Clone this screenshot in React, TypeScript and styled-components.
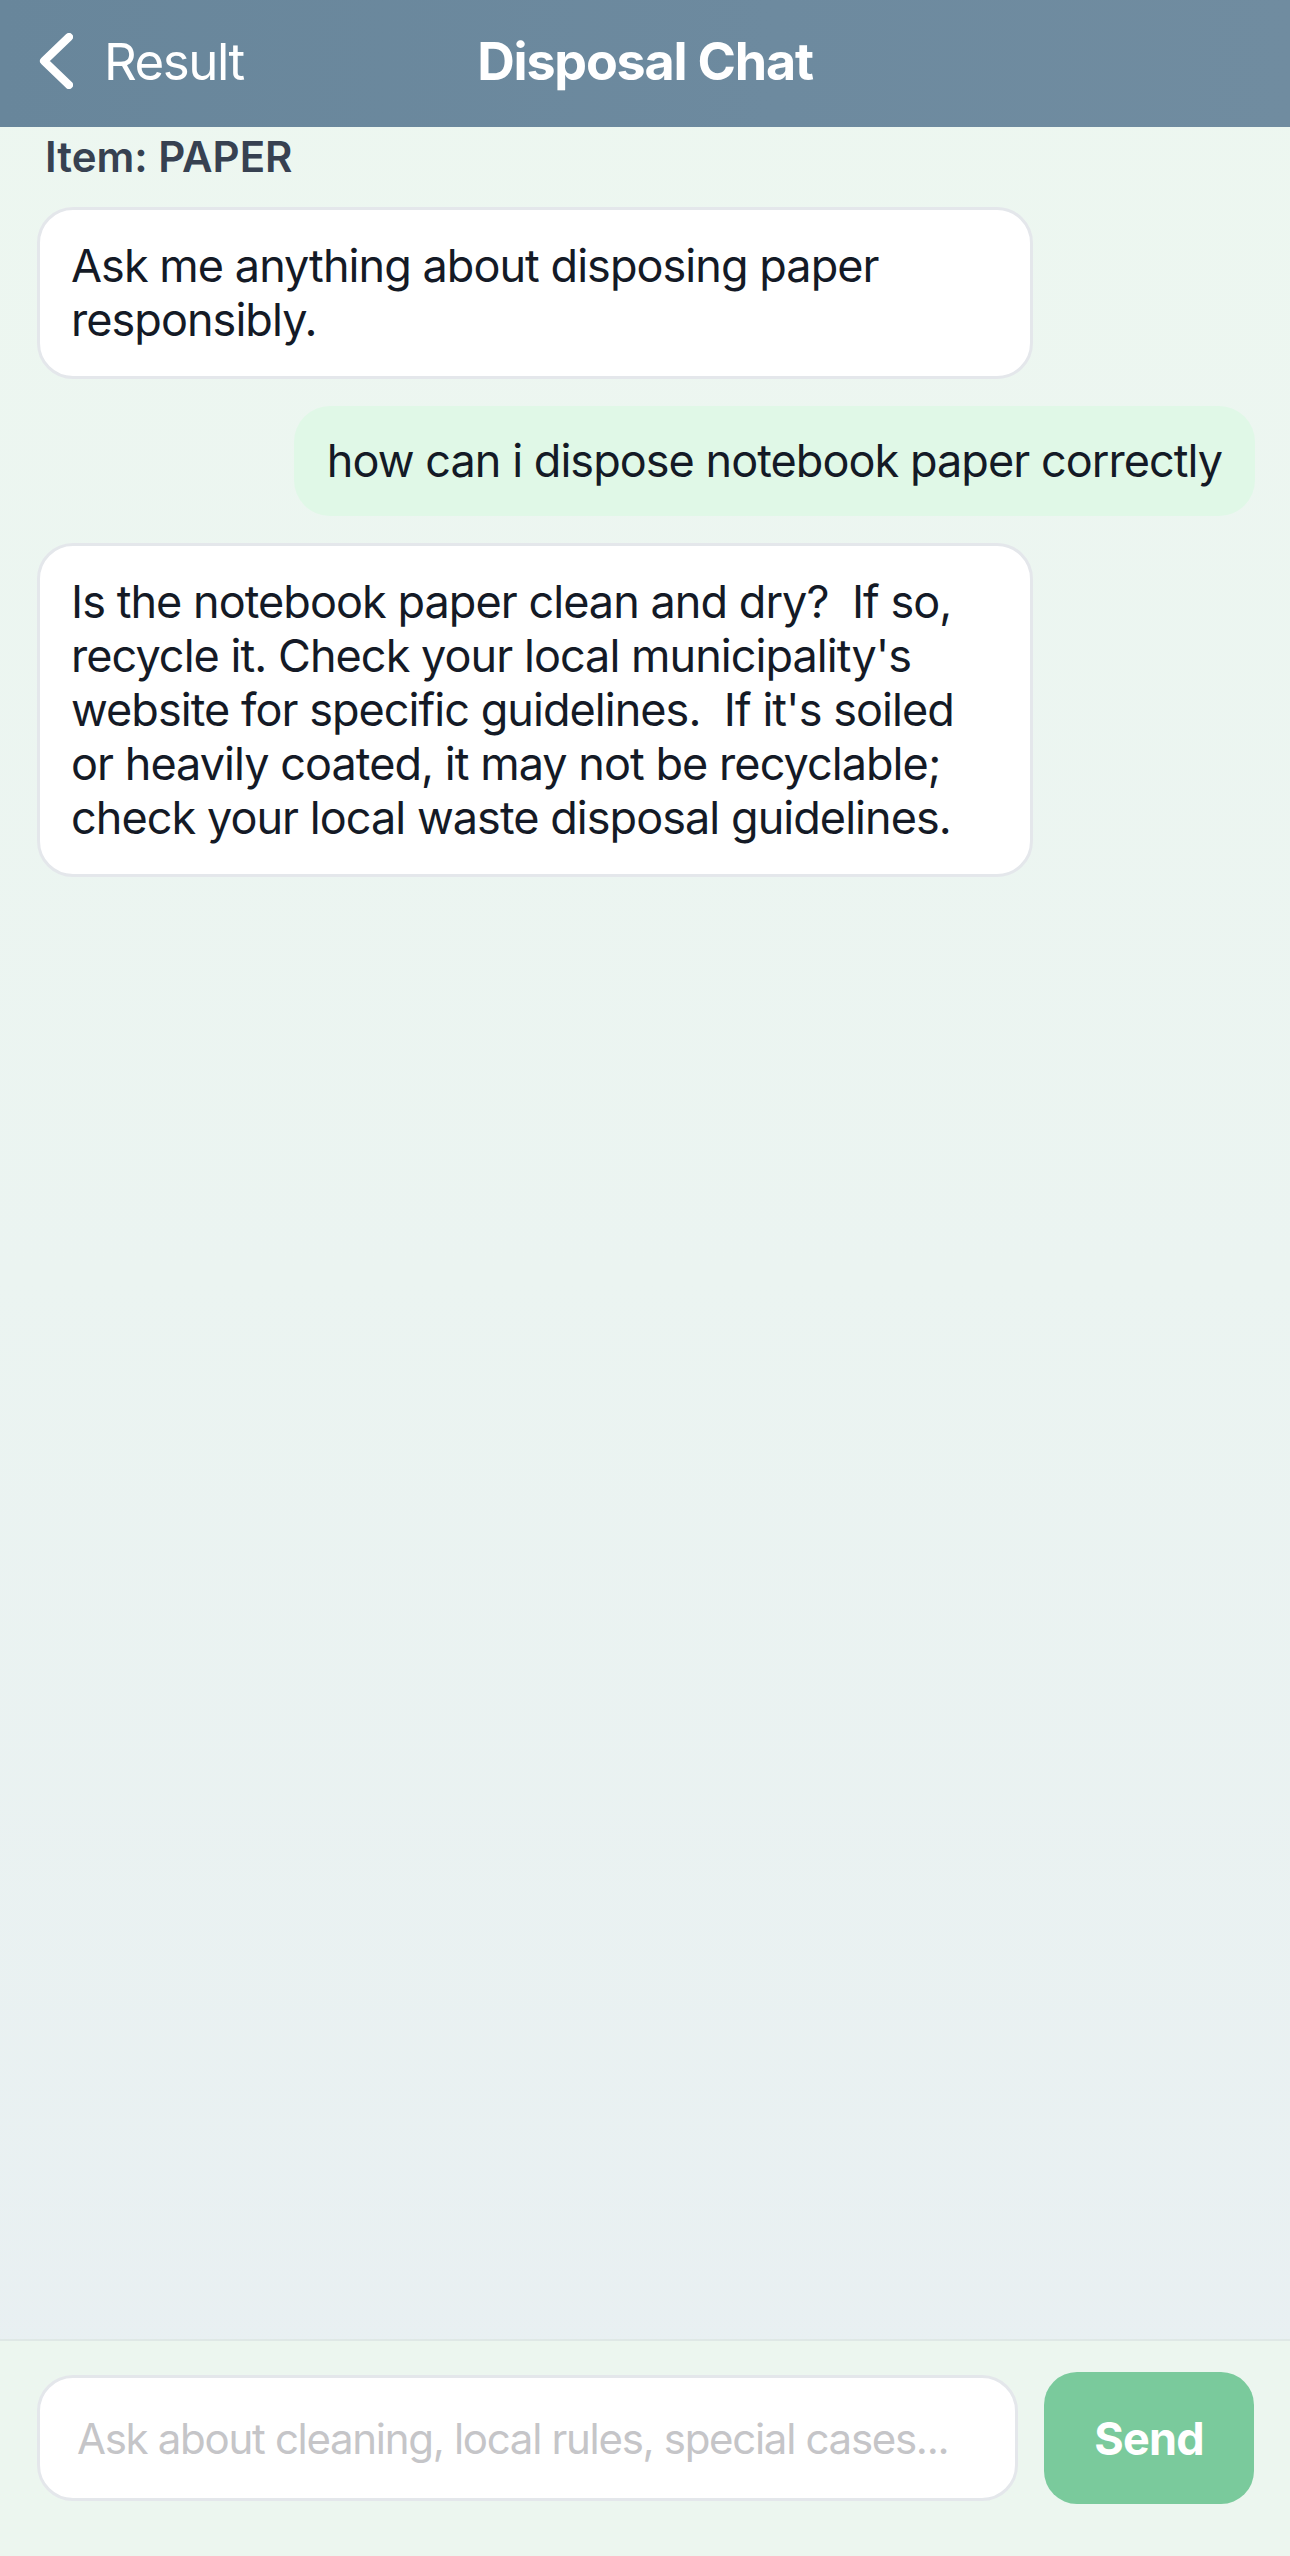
import React from 'react'
import styled, { createGlobalStyle } from 'styled-components'

const GlobalStyle = createGlobalStyle`
    html, body {
        margin: 0;
        padding: 0;
        height: 100%;
    }
    body {
        font-family: Inter, "Noto Sans", "Liberation Sans", sans-serif;
        -webkit-font-smoothing: antialiased;
    }
    #root {
        height: 100%;
    }
    * {
        box-sizing: border-box;
    }
`

const Screen = styled.div`
    display: flex;
    flex-direction: column;
    width: 1290px;
    height: 2556px;
    background: linear-gradient(180deg, #edf7f0 0%, #ebf4f1 50%, #e8eff2 100%);
`

const NavBar = styled.header`
    display: grid;
    grid-template-columns: 1fr auto 1fr;
    align-items: center;
    height: 127px;
    padding: 0 39px 5px 39px;
    background: linear-gradient(90deg, #68869b 0%, #6d8a9f 60%, #708ca0 100%);
    color: #ffffff;
`

const BackButton = styled.button`
    display: flex;
    align-items: center;
    gap: 31px;
    justify-self: start;
    padding: 0;
    border: none;
    background: none;
    color: inherit;
    font-family: inherit;
    font-size: 51px;
    font-weight: 400;
    letter-spacing: -1.5px;
    cursor: pointer;
`

const Title = styled.h1`
    margin: 0;
    font-size: 52px;
    font-weight: 700;
    letter-spacing: -1.2px;
`

const Thread = styled.main`
    flex: 1;
    display: flex;
    flex-direction: column;
    align-items: flex-start;
    gap: 27px;
    padding: 5px 35px 0 37px;
    overflow: hidden;
`

const ItemLabel = styled.div`
    margin: 0 0 -2px 8px;
    font-size: 42px;
    line-height: 50px;
    font-weight: 600;
    color: #374151;
`

const Bubble = styled.div<{ $mine?: boolean }>`
    max-width: 996px;
    align-self: ${p => (p.$mine ? 'flex-end' : 'flex-start')};
    padding: ${p => (p.$mine ? '28px 33px' : '29px 31px')};
    border: ${p => (p.$mine ? 'none' : '3px solid #e4e7eb')};
    border-radius: 36px;
    background: ${p => (p.$mine ? '#e0f8e7' : '#ffffff')};
    color: #141a26;
    font-size: 45px;
    line-height: 54px;
    letter-spacing: -0.95px;
    white-space: pre-wrap;
`

const Composer = styled.footer`
    display: flex;
    align-items: center;
    gap: 26px;
    padding: 31px 36px 52px 37px;
    border-top: 2px solid #dfe8e6;
    background: #ecf6ef;
`

const MessageInput = styled.input`
    flex: 1;
    min-width: 0;
    height: 126px;
    padding: 0 28px 0 37px;
    border: 3px solid #e4e7eb;
    border-radius: 36px;
    background: #ffffff;
    font-family: inherit;
    font-size: 42px;
    letter-spacing: -1.3px;
    color: #141a26;
    outline: none;
    text-overflow: ellipsis;
    &::placeholder {
        color: #c5c5c8;
    }
`

const SendButton = styled.button`
    width: 210px;
    height: 132px;
    border: none;
    border-radius: 33px;
    background: #7aca9c;
    color: #ffffff;
    font-family: inherit;
    font-size: 45px;
    font-weight: 700;
    letter-spacing: -0.8px;
    cursor: pointer;
`

const ChevronLeft = () => (
    <svg width="34" height="56" viewBox="0 0 34 56" fill="none">
        <polyline points="30,4 5,28 30,52" stroke="#ffffff" strokeWidth="8" strokeLinecap="round" strokeLinejoin="round" />
    </svg>
)

const messages = [
    { id: 1, mine: false, text: 'Ask me anything about disposing paper responsibly.' },
    { id: 2, mine: true, text: 'how can i dispose notebook paper correctly' },
    {
        id: 3,
        mine: false,
        text: "Is the notebook paper clean and dry?  If so, recycle it. Check your local municipality's website for specific guidelines.  If it's soiled or heavily coated, it may not be recyclable; check your local waste disposal guidelines.",
    },
]

const App: React.FC = () => {
    return (
        <>
            <GlobalStyle />
            <Screen>
                <NavBar>
                    <BackButton>
                        <ChevronLeft />
                        Result
                    </BackButton>
                    <Title>Disposal Chat</Title>
                    <span />
                </NavBar>
                <Thread>
                    <ItemLabel>Item: PAPER</ItemLabel>
                    {messages.map(m => (
                        <Bubble key={m.id} $mine={m.mine}>
                            {m.text}
                        </Bubble>
                    ))}
                </Thread>
                <Composer>
                    <MessageInput placeholder="Ask about cleaning, local rules, special cases..." />
                    <SendButton>Send</SendButton>
                </Composer>
            </Screen>
        </>
    )
}

export default App
